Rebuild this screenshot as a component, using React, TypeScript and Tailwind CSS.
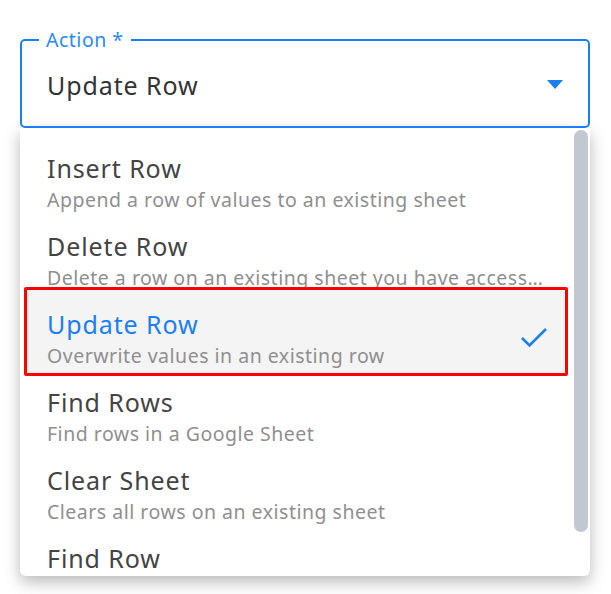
import React from 'react';

const actions = [
  { title: 'Insert Row', desc: 'Append a row of values to an existing sheet' },
  { title: 'Delete Row', desc: 'Delete a row on an existing sheet you have access to' },
  { title: 'Update Row', desc: 'Overwrite values in an existing row', selected: true },
  { title: 'Find Rows', desc: 'Find rows in a Google Sheet' },
  { title: 'Clear Sheet', desc: 'Clears all rows on an existing sheet' },
  { title: 'Find Row', desc: 'Find a row in a Google Sheet' },
];

const App: React.FC = () => {
  return (
    <div
      className="w-[611px] h-[594px] bg-white pt-[39px] pl-[20px] overflow-hidden"
      style={{ fontFamily: '"Noto Sans", "Open Sans", sans-serif' }}
    >
      {/* Select field */}
      <div className="relative w-[570px] h-[89px] border-2 border-[#1a7ef5] rounded-[5px] flex items-center pl-[25px] pr-[25px]">
        <span className="absolute -top-[13px] left-[17px] bg-white px-[7px] text-[19.5px] leading-[24px] tracking-[0.5px] text-[#2b8af7]">
          Action *
        </span>
        <span className="flex-1 text-[25px] leading-[32px] tracking-[0.9px] text-[#333333] mt-[2px]">Update Row</span>
        <svg width="16" height="9" viewBox="0 0 16 9" className="mt-[2px]">
          <path d="M0 0h16L8 9z" fill="#1a7ef5" />
        </svg>
      </div>

      {/* Dropdown menu */}
      <div className="w-[570px] h-[448px] bg-white rounded-b-[6px] shadow-[0_6px_16px_rgba(0,0,0,0.28)] flex overflow-hidden">
        <div className="flex-1 min-w-0 pt-[14px]">
          {actions.map((item) => (
            <div key={item.title} className="relative h-[78px] flex items-center pl-[27px] pr-[26px]">
              {item.selected && (
                <div className="absolute -top-[11px] bottom-0 left-[4px] right-[6px] bg-[#f4f4f4] border-[3px] border-[#ff0000] rounded-[2px]" />
              )}
              <div className="relative flex-1 min-w-0 self-start pt-[10px]">
                <div className={`text-[25px] leading-[32px] tracking-[0.9px] ${item.selected ? 'text-[#1a7ef5]' : 'text-[#444444]'}`}>
                  {item.title}
                </div>
                <div className="mt-[3px] text-[19.5px] leading-[26px] tracking-[0.5px] text-[#8f8f8f] truncate">
                  {item.desc}
                </div>
              </div>
              {item.selected && (
                <svg width="28" height="21" viewBox="0 0 28 21" className="relative shrink-0">
                  <polyline points="2,11 9.5,18.5 26,2" fill="none" stroke="#1a7ef5" strokeWidth="2.6" />
                </svg>
              )}
            </div>
          ))}
        </div>
        <div className="w-[16px] shrink-0 pt-[2px]">
          <div className="w-[14px] h-[402px] rounded-full bg-[#c2c8d0]" />
        </div>
      </div>
    </div>
  );
};

export default App;
